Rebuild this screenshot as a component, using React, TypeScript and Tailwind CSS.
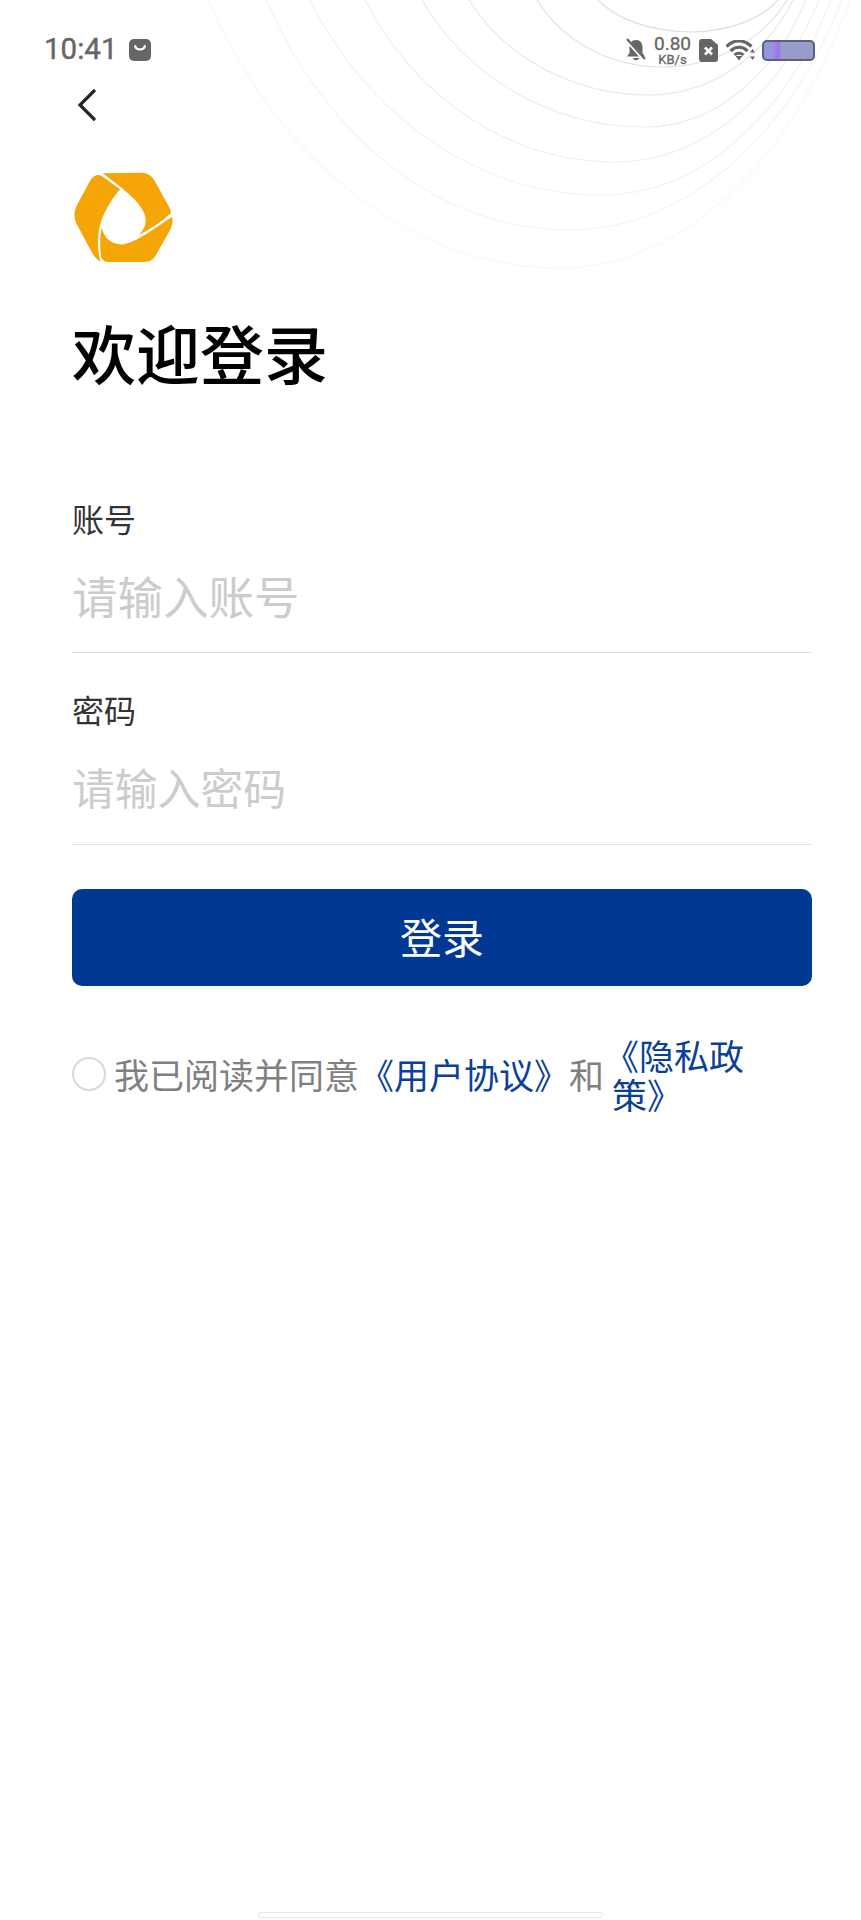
// left edge, lowest point, right edge of each background ring
const ARCS = [
  { l: 598, bx: 691, b: 32, r: 778, color: '#dedede' },
  { l: 537, bx: 662, b: 67, r: 787, color: '#e2e2e2' },
  { l: 469, bx: 649, b: 95, r: 793, color: '#e8e8e8' },
  { l: 422, bx: 645, b: 127, r: 806, color: '#ececec' },
  { l: 365, bx: 615, b: 162, r: 819, color: '#efefef' },
  { l: 310, bx: 602, b: 195, r: 831, color: '#f2f2f2' },
  { l: 266, bx: 569, b: 230, r: 842, color: '#f4f4f4' },
  { l: 208, bx: 560, b: 268, r: 850, color: '#f7f7f7' },
]

function Arcs() {
  return (
    <svg className="absolute top-0 left-0" width="861" height="280" viewBox="0 0 861 280" fill="none">
      {ARCS.map((arc) => {
        const ry = arc.b * 1.99
        const left = (arc.bx - arc.l) * 1.153
        const right = (arc.r - arc.bx) * 1.153
        return (
          <path
            key={arc.l}
            d={`M${arc.l} 0A${left} ${ry} 0 0 0 ${arc.bx} ${arc.b}A${right} ${ry} 0 0 0 ${arc.r} 0`}
            stroke={arc.color}
            strokeWidth="1.2"
          />
        )
      })}
    </svg>
  )
}

function BagIcon() {
  return (
    <svg width="22" height="22" viewBox="0 0 23 23">
      <rect width="23" height="23" rx="5" fill="#666" />
      <path d="M6.500 7.500C7.500 12 15.500 12 16.500 7.500" fill="none" stroke="#fff" strokeWidth="2.400" strokeLinecap="round" />
    </svg>
  )
}

function BellOffIcon() {
  return (
    <svg width="20" height="24" viewBox="0 0 20 24">
      <path d="M10 2C5.500 2 3.500 5.500 3.500 9.500L3.500 15L1 18.500L19 18.500L16.500 15L16.500 9.500C16.500 5.500 14.500 2 10 2Z" fill="#666" />
      <path d="M7 20C7.500 23 12.500 23 13 20Z" fill="#666" />
      <path d="M1 2.500L19 22.500" stroke="#fff" strokeWidth="3.500" />
      <path d="M1 1L19 21" stroke="#666" strokeWidth="2.200" />
    </svg>
  )
}

function SimIcon() {
  return (
    <svg width="19" height="23" viewBox="0 0 19 23">
      <path d="M3 0L12 0L19 6L19 20C19 22 18 23 16 23L3 23C1 23 0 22 0 20L0 3C0 1 1 0 3 0Z" fill="#666" />
      <path d="M6 8.500L13 15.500M13 8.500L6 15.500" stroke="#fff" strokeWidth="2.600" />
    </svg>
  )
}

function WifiIcon() {
  return (
    <svg width="29" height="21" viewBox="0 0 29 21" fill="none">
      <path d="M0.500 6.500C8 -1 18 -1 25.500 6.500" stroke="#666" strokeWidth="3.200" />
      <path d="M4.500 11C9.500 6 16.500 6 21.500 11" stroke="#666" strokeWidth="3.200" />
      <path d="M8.500 15C11 12.500 15 12.500 17.500 15" stroke="#666" strokeWidth="3" />
      <path d="M9.500 16H16.500L13 20.500Z" fill="#666" />
      <path d="M26.500 9L29 12.500H24ZM26.500 20L24 16.500H29Z" fill="#666" />
    </svg>
  )
}

function Logo() {
  return (
    <svg width="100" height="91" viewBox="27 20 300 274" fill="#f5a506">
      <path d="M110 32C98 26 86 30 76 44L34 122C26 140 26 158 34 176L80 262C88 276 96 284 106 290C96 250 94 195 116 148C130 118 148 92 165 72Z" />
      <path d="M113 24L226 22C246 22 258 28 268 44L312 124C317 134 319 140 318 144C290 170 255 192 222 210C240 190 248 170 238 145C226 115 198 92 168 66Z" />
      <path d="M110 188C118 222 140 238 170 238C205 238 270 190 322 155C325 170 322 184 314 198L272 272C262 288 250 291 232 291L128 291C118 291 110 284 108 274C104 245 104 215 110 188Z" />
    </svg>
  )
}

export default function App() {
  return (
    <div className="relative flex h-[1920px] w-full flex-col overflow-hidden bg-white pr-[49px] pl-[72px] font-['Noto_Sans_CJK_SC',sans-serif]">
      <Arcs />

      {/* status bar */}
      <header className="relative mt-[30px] -mr-[3px] -ml-[28px] flex h-[40px] items-center justify-between">
        <section className="flex items-center gap-[12px]">
          <span className="font-['Roboto',sans-serif] text-[29.500px] leading-none text-[#666] [-webkit-text-stroke:0.4px_#666]">10:41</span>
          <BagIcon />
        </section>
        <section className="flex items-center">
          <BellOffIcon />
          <div className="ml-[7px] flex w-[39px] flex-col items-center font-['Roboto',sans-serif] text-[#666]">
            <span className="text-[19px] leading-[18px] [-webkit-text-stroke:0.3px_#666]">0.80</span>
            <span className="text-[13px] leading-[13px] [-webkit-text-stroke:0.3px_#666]">KB/s</span>
          </div>
          <div className="ml-[7px]">
            <SimIcon />
          </div>
          <div className="ml-[8px]">
            <WifiIcon />
          </div>
          <div className="ml-[7px] h-[21px] w-[53px] rounded-[5px] border-2 border-[#5c5f7c] bg-[linear-gradient(90deg,#8a9ae0_0%,#9a90e0_18%,#a070f0_30%,#9a9cc8_36%,#9a9cc8_100%)]" />
        </section>
      </header>

      <button className="relative mt-[16px] flex h-[38px] w-[40px] items-center">
        <svg width="24" height="38" viewBox="0 0 24 38" fill="none">
          <path d="M23 4L8 19L23 34" stroke="#222" strokeWidth="3.200" />
        </svg>
      </button>

      <div className="relative mt-[48px] ml-[2px] h-[91px]">
        <Logo />
      </div>

      <h1 className="relative mt-[52px] text-[64px] leading-[72px] font-medium text-black">欢迎登录</h1>

      <label className="relative mt-[109px] text-[32px] leading-[44px] text-[#333]">账号</label>
      <div className="relative border-b border-[#dedede] pt-[25px] pb-[27px]">
        <input
          placeholder="请输入账号"
          className="h-[60px] w-full text-[45.500px] leading-[60px] outline-none placeholder:text-[#ccc]"
        />
      </div>

      <label className="relative mt-[34px] text-[32px] leading-[44px] text-[#333]">密码</label>
      <div className="relative border-b border-[#e4e4e4] pt-[25px] pb-[28px]">
        <input
          placeholder="请输入密码"
          className="h-[60px] w-full text-[42.800px] leading-[60px] outline-none placeholder:text-[#ccc]"
        />
      </div>

      <button className="relative mt-[44px] flex h-[97px] w-full items-center justify-center rounded-[10px] bg-[#003893] pb-[4px] text-[42px] text-white">
        登录
      </button>

      <div className="relative mt-[49px] flex items-start text-[35px] leading-[39px]">
        <span className="mt-[22px] h-[34px] w-[34px] shrink-0 rounded-full border-2 border-[#d9d9d9]" />
        <span className="mt-[19px] ml-[8px] text-[#808080]">我已阅读并同意</span>
        <span className="mt-[19px] text-[#0b4098]">《用户协议》</span>
        <span className="mt-[19px] text-[#808080]">和</span>
        <span className="ml-[8px] w-[140px] -indent-[8px] text-[#0b4098]">《隐私政策》</span>
      </div>

      <div className="absolute bottom-[2px] left-[258px] h-[6px] w-[345px] rounded-full border border-[#e5e5e5] bg-white" />
    </div>
  )
}
